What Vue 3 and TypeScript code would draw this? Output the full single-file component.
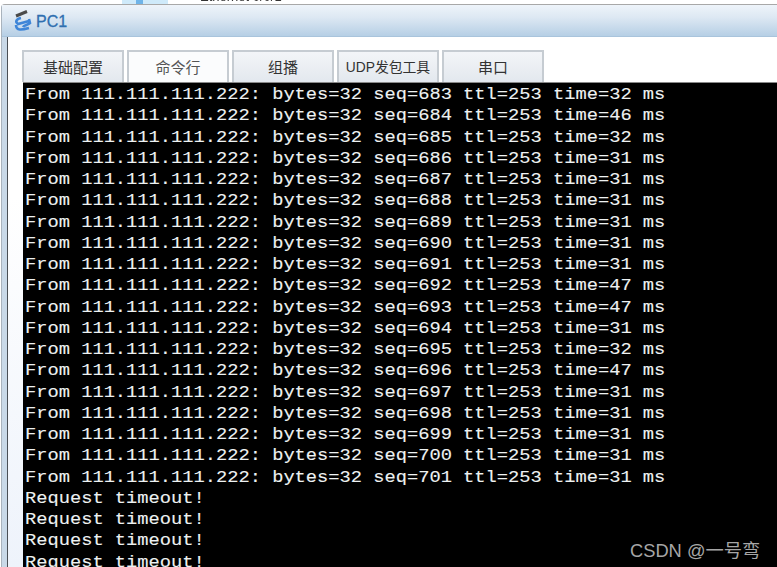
<script setup lang="ts">
const seqs: [number, number][] = [
  [683, 32], [684, 46], [685, 32], [686, 31], [687, 31], [688, 31], [689, 31], [690, 31], [691, 31],
  [692, 47], [693, 47], [694, 31], [695, 32], [696, 47], [697, 31], [698, 31], [699, 31], [700, 31], [701, 31],
]
const tabs = ['基础配置', '命令行', '组播', 'UDP发包工具', '串口']
const lines = [
  ...seqs.map(([s, t]) => `From 111.111.111.222: bytes=32 seq=${s} ttl=253 time=${t} ms`),
  'Request timeout!', 'Request timeout!', 'Request timeout!', 'Request timeout!',
]
</script>

<template>
  <div class="page">
    <div class="strip">
      <span class="blip"></span>
      <span class="cut">Ethernet 0/0/1</span>
    </div>
    <div class="window">
      <div class="title">
        <svg class="logo" width="20" height="22" viewBox="0 0 20 22">
          <path d="M3 6 L14 1.5" stroke="#4a4a4a" stroke-width="3" fill="none" />
          <path d="M8 8 C3 9 2 12 5 14 L16 11 M16 9 L17 13 C15 15 11 15 10 17 M3 15 C3 21 9 20 16 18" stroke="#3f86d8" stroke-width="2.6" fill="none" />
        </svg>
        <span class="name">PC1</span>
      </div>
      <div class="body">
        <div class="tabs">
          <div v-for="(t, i) in tabs" :key="t" class="tab" :class="{ active: i === 1, udp: i === 3 }">{{ t }}</div>
        </div>
        <div class="term">
          <div v-for="(l, i) in lines" :key="i" class="line">{{ l }}</div>
        </div>
      </div>
    </div>
    <div class="mark">CSDN @一号弯</div>
  </div>
</template>

<style>
html, body { margin: 0; overflow: hidden; background: #fff; }
</style>

<style scoped>
.page {
  width: 777px;
  height: 567px;
  overflow: hidden;
  position: relative;
  font-family: "Liberation Sans", "Noto Sans CJK SC", sans-serif;
  filter: blur(0.4px);
}
.strip {
  height: 4px;
  position: relative;
  overflow: hidden;
}
.blip {
  position: absolute;
  left: 122px;
  top: 0;
  width: 46px;
  height: 4px;
  background: linear-gradient(90deg, #cfeafa 0 30%, #6fb4e8 30% 45%, #cfeafa 45% 100%);
}
.cut {
  position: absolute;
  left: 200px;
  top: -11px;
  font-size: 13px;
  color: #333;
}
.window {
  margin-left: 1px;
  border-top: 1px solid #a8a8a8;
  border-left: 1px solid #a9b3bd;
  border-top-left-radius: 4px;
  background: #c9d9e8;
  height: 562px;
  display: flex;
  flex-direction: column;
}
.title {
  height: 31px;
  flex: none;
  display: flex;
  align-items: center;
  padding-left: 11px;
  gap: 3px;
  background: linear-gradient(180deg, #eef4fa 0%, #dde8f3 40%, #b6cfe5 100%);
  border-bottom: 1px solid #a9c4dc;
}
.logo { flex: none; }
.name {
  font-size: 16px;
  color: #2f6fb0;
  -webkit-text-stroke: 0.3px #2f6fb0;
  margin-top: 2px;
}
.body {
  flex: 1;
  margin-left: 5px;
  border-left: 1px solid #4a4f55;
  background: linear-gradient(180deg, #fff 0%, #fff 30%, #eef3fb 100%);
  padding: 13px 0 0 14px;
  display: flex;
  flex-direction: column;
  min-height: 0;
}
.tabs {
  display: flex;
  gap: 3px;
  height: 32px;
  flex: none;
}
.tab {
  width: 102px;
  box-sizing: border-box;
  border: 2px solid #c6ccd2;
  border-bottom: 0;
  background: linear-gradient(180deg, #f3f5f8, #e3e8ee);
  font-size: 15px;
  line-height: 31px;
  text-align: center;
  color: #333;
}
.tab.active {
  background: #fbfcfd;
  color: #555;
}
.tab.udp { font-size: 13.8px; }
.term {
  flex: 1;
  min-height: 0;
  margin-left: 1px;
  overflow: hidden;
  background: #000;
  border-top: 1px solid #888;
  padding-top: 2px;
  padding-left: 2px;
}
.line {
  font-family: "Liberation Mono", monospace;
  font-size: 16px;
  line-height: 21.25px;
  height: 21.25px;
  color: #eef2f2;
  white-space: pre;
  transform: scaleX(1.17);
  transform-origin: left center;
  -webkit-text-stroke: 0.1px #eef2f2;
}
.mark {
  position: absolute;
  left: 630px;
  top: 536px;
  font-size: 18.3px;
  color: #a6a6a6;
  white-space: nowrap;
}
</style>
